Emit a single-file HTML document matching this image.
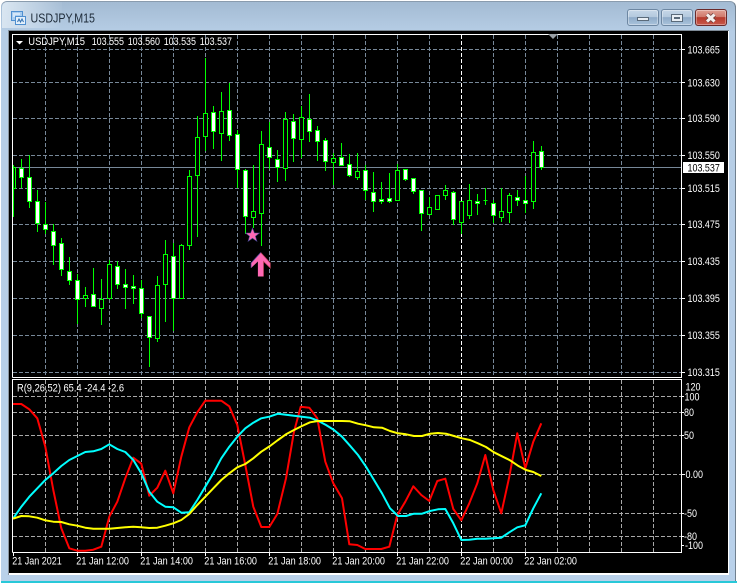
<!DOCTYPE html>
<html><head><meta charset="utf-8"><style>
html,body{margin:0;padding:0;width:739px;height:583px;overflow:hidden;background:#fff}
svg{position:absolute;left:0;top:0}
text{font-family:"Liberation Sans",sans-serif;font-size:11px;fill:#fff}
.b{position:absolute;top:9px;height:17px;box-sizing:border-box;border:1px solid #6d87a2;border-radius:3px;background:linear-gradient(#c6d7e8 0,#b4c9de 45%,#8fabc8 50%,#a9c3dc 100%);box-shadow:inset 0 0 0 1px rgba(255,255,255,.35)}
</style></head><body>
<div style="position:absolute;left:1px;top:1px;width:735px;height:580px;border-radius:6px 6px 0 0;background:linear-gradient(#a3bbd3 0,#b6cde5 30px,#b9d1ea 100%);border-top:1px solid #8a9cae;box-sizing:border-box;border-right:1px solid #70808f"></div>
<div style="position:absolute;left:2px;top:2px;width:60px;height:26px;border-radius:5px 0 0 0;background:linear-gradient(100deg,#dbe7f2 0,rgba(200,218,235,0) 100%)"></div>
<div style="position:absolute;left:1px;top:581px;width:736px;height:2px;background:#28c8d8"></div>
<div style="position:absolute;left:8px;top:30px;width:721px;height:545px;background:#fff;border-left:1px solid #8a949e;border-top:1px solid #7e8a96;box-sizing:border-box"></div>
<div style="position:absolute;left:9px;top:31px;width:719px;height:542px;background:#000"></div>
<div class="b" style="left:627px;width:32px"></div>
<div class="b" style="left:661px;width:32px"></div>
<div class="b" style="left:695px;width:32px;border-color:#6b2a2a;background:linear-gradient(#e0a094 0,#d07a6c 45%,#b53a2c 50%,#c9584a 100%)"></div>
<svg width="739" height="583" viewBox="0 0 739 583" xmlns="http://www.w3.org/2000/svg">
<!-- window icon -->
<g shape-rendering="crispEdges">
<rect x="11.500" y="11.500" width="11" height="9" fill="#a8cdf0" stroke="#4f8fd0"/>
<rect x="15.500" y="16.500" width="10" height="8" fill="#e4f0fb" stroke="#4f8fd0"/>
<path d="M13 14h7M13 16h2" stroke="#fff"/>
</g>
<path d="M17.500 22l1.500-3 1.500 3 1.500-3 1.500 3" fill="none" stroke="#2f6fb0"/>
<text x="30.500" y="22.500" textLength="64.500" lengthAdjust="spacingAndGlyphs" style="font-size:12.500px;fill:#1d2a38">USDJPY,M15</text>
<!-- window buttons -->
<g shape-rendering="crispEdges">
<rect x="637.500" y="17.500" width="11" height="3" fill="#e8eef4" stroke="#5a6a7a"/>
<rect x="671.500" y="14.500" width="11" height="7" fill="#e8eef4" stroke="#5a6a7a"/>
<rect x="674" y="17" width="6" height="2" fill="#5a6a7a"/>
</g>
<path d="M707 14.500l7.500 7M714.500 14.500l-7.500 7" stroke="#6b3a36" stroke-width="4.500" fill="none"/>
<path d="M707 14.500l7.500 7M714.500 14.500l-7.500 7" stroke="#f4f0ee" stroke-width="3" fill="none"/>

<!-- main grid -->
<g shape-rendering="crispEdges">
<path d="M13 49.500H681M13 82.500H681M13 118.500H681M13 155.500H681M13 188.500H681M13 224.500H681M13 261.500H681M13 298.500H681M13 335.500H681M13 372.500H681" stroke="#778899" stroke-dasharray="4 2" fill="none"/>
<path d="M45.500 35V377M77.500 35V377M109.500 35V377M141.500 35V377M173.500 35V377M205.500 35V377M237.500 35V377M269.500 35V377M301.500 35V377M333.500 35V377M365.500 35V377M397.500 35V377M429.500 35V377M493.500 35V377M525.500 35V377M557.500 35V377M589.500 35V377M621.500 35V377M653.500 35V377" stroke="#778899" stroke-dasharray="4 2" fill="none"/>
<path d="M461.500 35V377" stroke="#fff" stroke-dasharray="4 2" fill="none"/>
<path d="M13 167.500H681" stroke="#778899" fill="none"/>
<!-- wicks -->
<path stroke="#00ff00" fill="none" d="M13.500 165V217M21.500 159V188M29.500 155V208M37.500 190V232M45.500 202V234M53.500 224V265M61.500 238V276M69.500 257V285M77.500 274V324M85.500 287V307M93.500 268V307M101.500 279V325M109.500 260V299M117.500 261V289M125.500 269V309M133.500 275V304M141.500 280V318M149.500 316V367M157.500 276V342M165.500 240V322M173.500 243V331M181.500 244V299M189.500 170V250M197.500 116V237M205.500 58V151M213.500 106V149M221.500 92V161M229.500 83V141M237.500 130V188M245.500 169V234M253.500 165V228M261.500 131V246M269.500 122V169M277.500 150V182M285.500 112V181M293.500 114V162M301.500 106V158M309.500 94V142M317.500 126V161M325.500 138V171M333.500 153V185M341.500 143V166M349.500 154V177M357.500 153V180M365.500 165V200M373.500 172V212M381.500 182V204M389.500 173V203M397.500 164V201M405.500 169V181M413.500 178V194M421.500 190V231M429.500 197V215M437.500 195V209M445.500 185V200M453.500 191V225M461.500 201V234M469.500 184V219M477.500 194V215M485.500 188V205M493.500 200V223M501.500 188V222M509.500 193V223M517.500 190V206M525.500 176V213M533.500 141V209M541.500 146V170"/>
<!-- hollow bodies -->
<path stroke="#00ff00" fill="#000" d="M83.500 295.500h4v3h-4zM99.500 299.500h4v9h-4zM107.500 264.500h4v34h-4zM155.500 285.500h4v53h-4zM163.500 254.500h4v30h-4zM179.500 245.500h4v53h-4zM187.500 176.500h4v69h-4zM195.500 137.500h4v38h-4zM203.500 113.500h4v23h-4zM219.500 111.500h4v22h-4zM251.500 211.500h4v6h-4zM259.500 144.500h4v69h-4zM283.500 119.500h4v49h-4zM299.500 117.500h4v22h-4zM331.500 158.500h4v4h-4zM355.500 171.500h4v6h-4zM395.500 170.500h4v30h-4zM427.500 207.500h4v7h-4zM435.500 195.500h4v14h-4zM443.500 190.500h4v5h-4zM459.500 201.500h4v21h-4zM467.500 200.500h4v15h-4zM499.500 211.500h4v6h-4zM507.500 195.500h4v17h-4zM531.500 152.500h4v49h-4zM483.500 200.500h4"/>
<path stroke="#00ff00" fill="none" d="M13 167.500h2.500v21H13"/>
<!-- white bodies -->
<path stroke="#00ff00" fill="#fff" d="M19.500 168.500h4v9h-4zM27.500 177.500h4v24h-4zM35.500 201.500h4v22h-4zM43.500 224.500h4v5h-4zM51.500 231.500h4v14h-4zM59.500 243.500h4v26h-4zM67.500 271.500h4v9h-4zM75.500 280.500h4v19h-4zM91.500 294.500h4v12h-4zM115.500 266.500h4v18h-4zM123.500 284.500h4v3h-4zM131.500 286.500h4v2h-4zM139.500 288.500h4v25h-4zM147.500 316.500h4v21h-4zM171.500 256.500h4v42h-4zM211.500 112.500h4v19h-4zM227.500 110.500h4v25h-4zM235.500 134.500h4v35h-4zM243.500 170.500h4v46h-4zM267.500 147.500h4v10h-4zM275.500 159.500h4v8h-4zM291.500 121.500h4v17h-4zM307.500 119.500h4v12h-4zM315.500 130.500h4v11h-4zM323.500 140.500h4v21h-4zM339.500 157.500h4v8h-4zM347.500 164.500h4v11h-4zM363.500 170.500h4v20h-4zM371.500 192.500h4v9h-4zM379.500 199.500h4v2h-4zM387.500 198.500h4v3h-4zM403.500 169.500h4v10h-4zM411.500 178.500h4v13h-4zM419.500 190.500h4v23h-4zM451.500 192.500h4v27h-4zM475.500 201.500h4v2h-4zM491.500 203.500h4v12h-4zM515.500 197.500h4v3h-4zM523.500 200.500h4v3h-4zM539.500 151.500h4v16h-4z"/>
<!-- frames -->
<path d="M12.500 377.500V34.500H681.500V377.500H12.500M12.500 552.500V379.500H681.500V552.500H12.500" stroke="#fff" fill="none"/>
<path d="M682 49.500h3M682 82.500h3M682 118.500h3M682 155.500h3M682 188.500h3M682 224.500h3M682 261.500h3M682 298.500h3M682 335.500h3M682 372.500h3M682 396.500h2M682 412.500h2M682 435.500h2M682 474.500h3M682 513.500h2M682 536.500h2M682 545.500h2M13.500 553v3M77.500 553v3M141.500 553v3M205.500 553v3M269.500 553v3M333.500 553v3M397.500 553v3M461.500 553v3M525.500 553v3" stroke="#fff" fill="none"/>
<!-- lower grid -->
<path d="M13 396.500H681M13 412.500H681M13 435.500H681M13 474.500H681M13 513.500H681M13 536.500H681" stroke="#a8a8a8" stroke-dasharray="4 2" fill="none"/>
<path d="M45.500 380V552M77.500 380V552M109.500 380V552M141.500 380V552M173.500 380V552M205.500 380V552M237.500 380V552M269.500 380V552M301.500 380V552M333.500 380V552M365.500 380V552M397.500 380V552M429.500 380V552M493.500 380V552M525.500 380V552M557.500 380V552M589.500 380V552M621.500 380V552M653.500 380V552" stroke="#a8a8a8" stroke-dasharray="4 2" fill="none"/>
<path d="M461.500 380V552" stroke="#fff" stroke-dasharray="4 2" fill="none"/>
</g>
<path d="M16 41h7l-3.500 3.500z" fill="#fff"/>
<path d="M548 34h10l-5 5z" fill="#9aa0a6"/>
<!-- star and arrow -->
<path d="M252.500 228l1.900 5h5.100l-4.100 3.200 1.500 5.100-4.400-3-4.400 3 1.500-5.100-4.100-3.200h5.100z" fill="#ff69b4" stroke="#4a4a9a" stroke-width=".6"/>
<path d="M260.700 252.500l9.600 10.500v5l-6.800-6.500v15h-5.600v-15l-6.800 6.500v-5z" fill="#ff69b4"/>
<path d="M260.700 252.500l9.600 10.500v5l-6.800-6.500v15" fill="none" stroke="#c0405a" stroke-width=".7"/>
<path d="M260.700 252.500l-9.600 10.500v5" fill="none" stroke="#5a4aa0" stroke-width=".7"/>
<!-- indicator lines -->
<clipPath id="c"><rect x="13" y="380" width="668" height="172"/></clipPath>
<g clip-path="url(#c)" fill="none" stroke-width="2" stroke-linejoin="round">
<polyline stroke="#ff0000" points="13,404 21.300,404 29.300,409.300 37.300,418.300 45.300,446.700 53.300,490 61.300,528.300 69.300,548.300 77.300,550.700 85.300,550.700 93.300,549.700 101.300,546.700 109.300,516.700 117.300,501.700 125.300,478.300 133.300,457.700 141.300,463.700 149.300,495.700 157.300,487.700 165.300,470.700 173.300,493.300 181.300,456.700 189.300,427.300 197.300,412.300 205.300,400.700 213.300,400.700 221.300,400.700 229.300,406.300 237.300,425 245.300,465 253.300,506.700 261.300,527 269.300,527 277.300,514 286,478.300 294,431.700 300.700,406.700 309.300,407.700 317.300,418.300 325.300,461.700 333.300,483.300 342,498.300 349.300,544.300 357.300,545 365.300,549 373.300,549 381.300,549 389.300,546.700 397.300,515 405.300,501.700 413.300,486.300 421.300,495 429.300,501 437.300,481 445.300,478.700 453.300,509 461.300,520.300 469.300,503.300 477.300,483.300 485.300,455 493.300,490 501.300,513.300 509.300,476.700 517.300,433.300 525.300,468.300 533.300,441.700 541.300,423.300"/>
<polyline stroke="#00ffff" points="13,518.700 21.300,506.700 29.300,496.700 37.300,488.300 45.300,480 53.300,473.300 61.300,466 69.300,460 77.300,456 85.300,452 93.300,451.300 101.300,449 109.300,444.300 117.300,449 125.300,452 133.300,460 141.300,473.300 149.300,491.700 157.300,501.700 165.300,506.700 173.300,507.300 181.300,512.700 189.300,512.300 197.300,500 205.300,486.700 213.300,473.300 221.300,458.300 229.300,446.700 237.300,436.700 245.300,428.300 253.300,422.700 261.300,418.300 269.300,416.700 278,413.700 286,414.700 294,415.700 302,416.700 310,417.700 318,420.700 326,425 334,430 342,436.700 350,445.700 358,455 366,466.700 374,480 382,493.300 390,508.300 398,516 406,516 414,513.700 422,513.700 430,511 438,509.300 445.300,509 453.300,523.300 461.300,540 469.300,539.700 477.300,538.700 485.300,538.700 493.300,538.300 501.300,537.700 509.300,532.300 517.300,527.300 525.300,525.300 533.300,508.300 541.300,493.300"/>
<polyline stroke="#ffff00" points="13,518.700 21.300,516 29.300,516.300 37.300,517.700 45.300,520.300 53.300,521.700 61.300,522 69.300,524.300 77.300,525.700 85.300,527.700 93.300,528.700 101.300,528.700 109.300,528.700 117.300,528 125.300,527.300 133.300,526.700 141.300,527.300 149.300,528 157.300,527.700 165.300,525.700 173.300,523.300 181.300,520 189.300,514 197.300,505 205.300,496.700 213.300,488.300 221.300,480 229.300,473.300 237.300,467.300 245.300,464 253.300,458.300 261.300,451.700 270,446 278,440 286,434.300 294,430 302,426 310,422.300 318,421 326,421 334,421 342,421 350,421.300 358,423.700 366,425.300 374,427.300 382,427.700 390,431 398,433.300 406,434.300 414,436 422,436 430,433.700 438,433 446,433.700 454,436 462,438.300 470,440 478,443.300 486,447 494,452.300 502,456.300 510,460.300 518,465.700 526,470 533.300,472 541.300,476"/>
</g>
<!-- text -->
<text x="28.300" y="45" textLength="56.700" lengthAdjust="spacingAndGlyphs">USDJPY,M15</text>
<text x="91.700" y="45" textLength="32.300" lengthAdjust="spacingAndGlyphs">103.555</text>
<text x="127.700" y="45" textLength="32.300" lengthAdjust="spacingAndGlyphs">103.560</text>
<text x="163.700" y="45" textLength="32.300" lengthAdjust="spacingAndGlyphs">103.535</text>
<text x="199.700" y="45" textLength="32.300" lengthAdjust="spacingAndGlyphs">103.537</text>
<text x="687.500" y="53.500" textLength="32.300" lengthAdjust="spacingAndGlyphs">103.665</text>
<text x="687.500" y="86.500" textLength="32.300" lengthAdjust="spacingAndGlyphs">103.630</text>
<text x="687.500" y="122" textLength="32.300" lengthAdjust="spacingAndGlyphs">103.590</text>
<text x="687.500" y="159" textLength="32.300" lengthAdjust="spacingAndGlyphs">103.550</text>
<text x="687.500" y="192" textLength="32.300" lengthAdjust="spacingAndGlyphs">103.515</text>
<text x="687.500" y="228" textLength="32.300" lengthAdjust="spacingAndGlyphs">103.475</text>
<text x="687.500" y="265" textLength="32.300" lengthAdjust="spacingAndGlyphs">103.435</text>
<text x="687.500" y="302" textLength="32.300" lengthAdjust="spacingAndGlyphs">103.395</text>
<text x="687.500" y="339" textLength="32.300" lengthAdjust="spacingAndGlyphs">103.355</text>
<text x="687.500" y="376" textLength="32.300" lengthAdjust="spacingAndGlyphs">103.315</text>
<rect x="683" y="162" width="41" height="11" fill="#fff" shape-rendering="crispEdges"/>
<text x="687.500" y="171.500" textLength="32.300" lengthAdjust="spacingAndGlyphs" style="fill:#000">103.537</text>
<text x="17" y="391.500" textLength="107" lengthAdjust="spacingAndGlyphs">R(9,26,52) 65.4 -24.4 -2.6</text>
<text x="685.500" y="390.500" textLength="15" lengthAdjust="spacingAndGlyphs">120</text>
<text x="684.500" y="400.500" textLength="15" lengthAdjust="spacingAndGlyphs">100</text>
<text x="684" y="416" textLength="10" lengthAdjust="spacingAndGlyphs">80</text>
<text x="684" y="439" textLength="10" lengthAdjust="spacingAndGlyphs">50</text>
<text x="685.500" y="478" textLength="17.500" lengthAdjust="spacingAndGlyphs">0.00</text>
<text x="684" y="517" textLength="13" lengthAdjust="spacingAndGlyphs">-50</text>
<text x="684" y="540" textLength="13" lengthAdjust="spacingAndGlyphs">-80</text>
<text x="685" y="549" textLength="18" lengthAdjust="spacingAndGlyphs">-100</text>
<text x="12.300" y="564.500" textLength="49.500" lengthAdjust="spacingAndGlyphs">21 Jan 2021</text>
<text x="76.300" y="564.500" textLength="52.700" lengthAdjust="spacingAndGlyphs">21 Jan 12:00</text>
<text x="140.300" y="564.500" textLength="52.700" lengthAdjust="spacingAndGlyphs">21 Jan 14:00</text>
<text x="204.300" y="564.500" textLength="52.700" lengthAdjust="spacingAndGlyphs">21 Jan 16:00</text>
<text x="268.300" y="564.500" textLength="52.700" lengthAdjust="spacingAndGlyphs">21 Jan 18:00</text>
<text x="332.300" y="564.500" textLength="52.700" lengthAdjust="spacingAndGlyphs">21 Jan 20:00</text>
<text x="396.300" y="564.500" textLength="52.700" lengthAdjust="spacingAndGlyphs">21 Jan 22:00</text>
<text x="460.300" y="564.500" textLength="52.700" lengthAdjust="spacingAndGlyphs">22 Jan 00:00</text>
<text x="524.300" y="564.500" textLength="52.700" lengthAdjust="spacingAndGlyphs">22 Jan 02:00</text>
</svg>
</body></html>
